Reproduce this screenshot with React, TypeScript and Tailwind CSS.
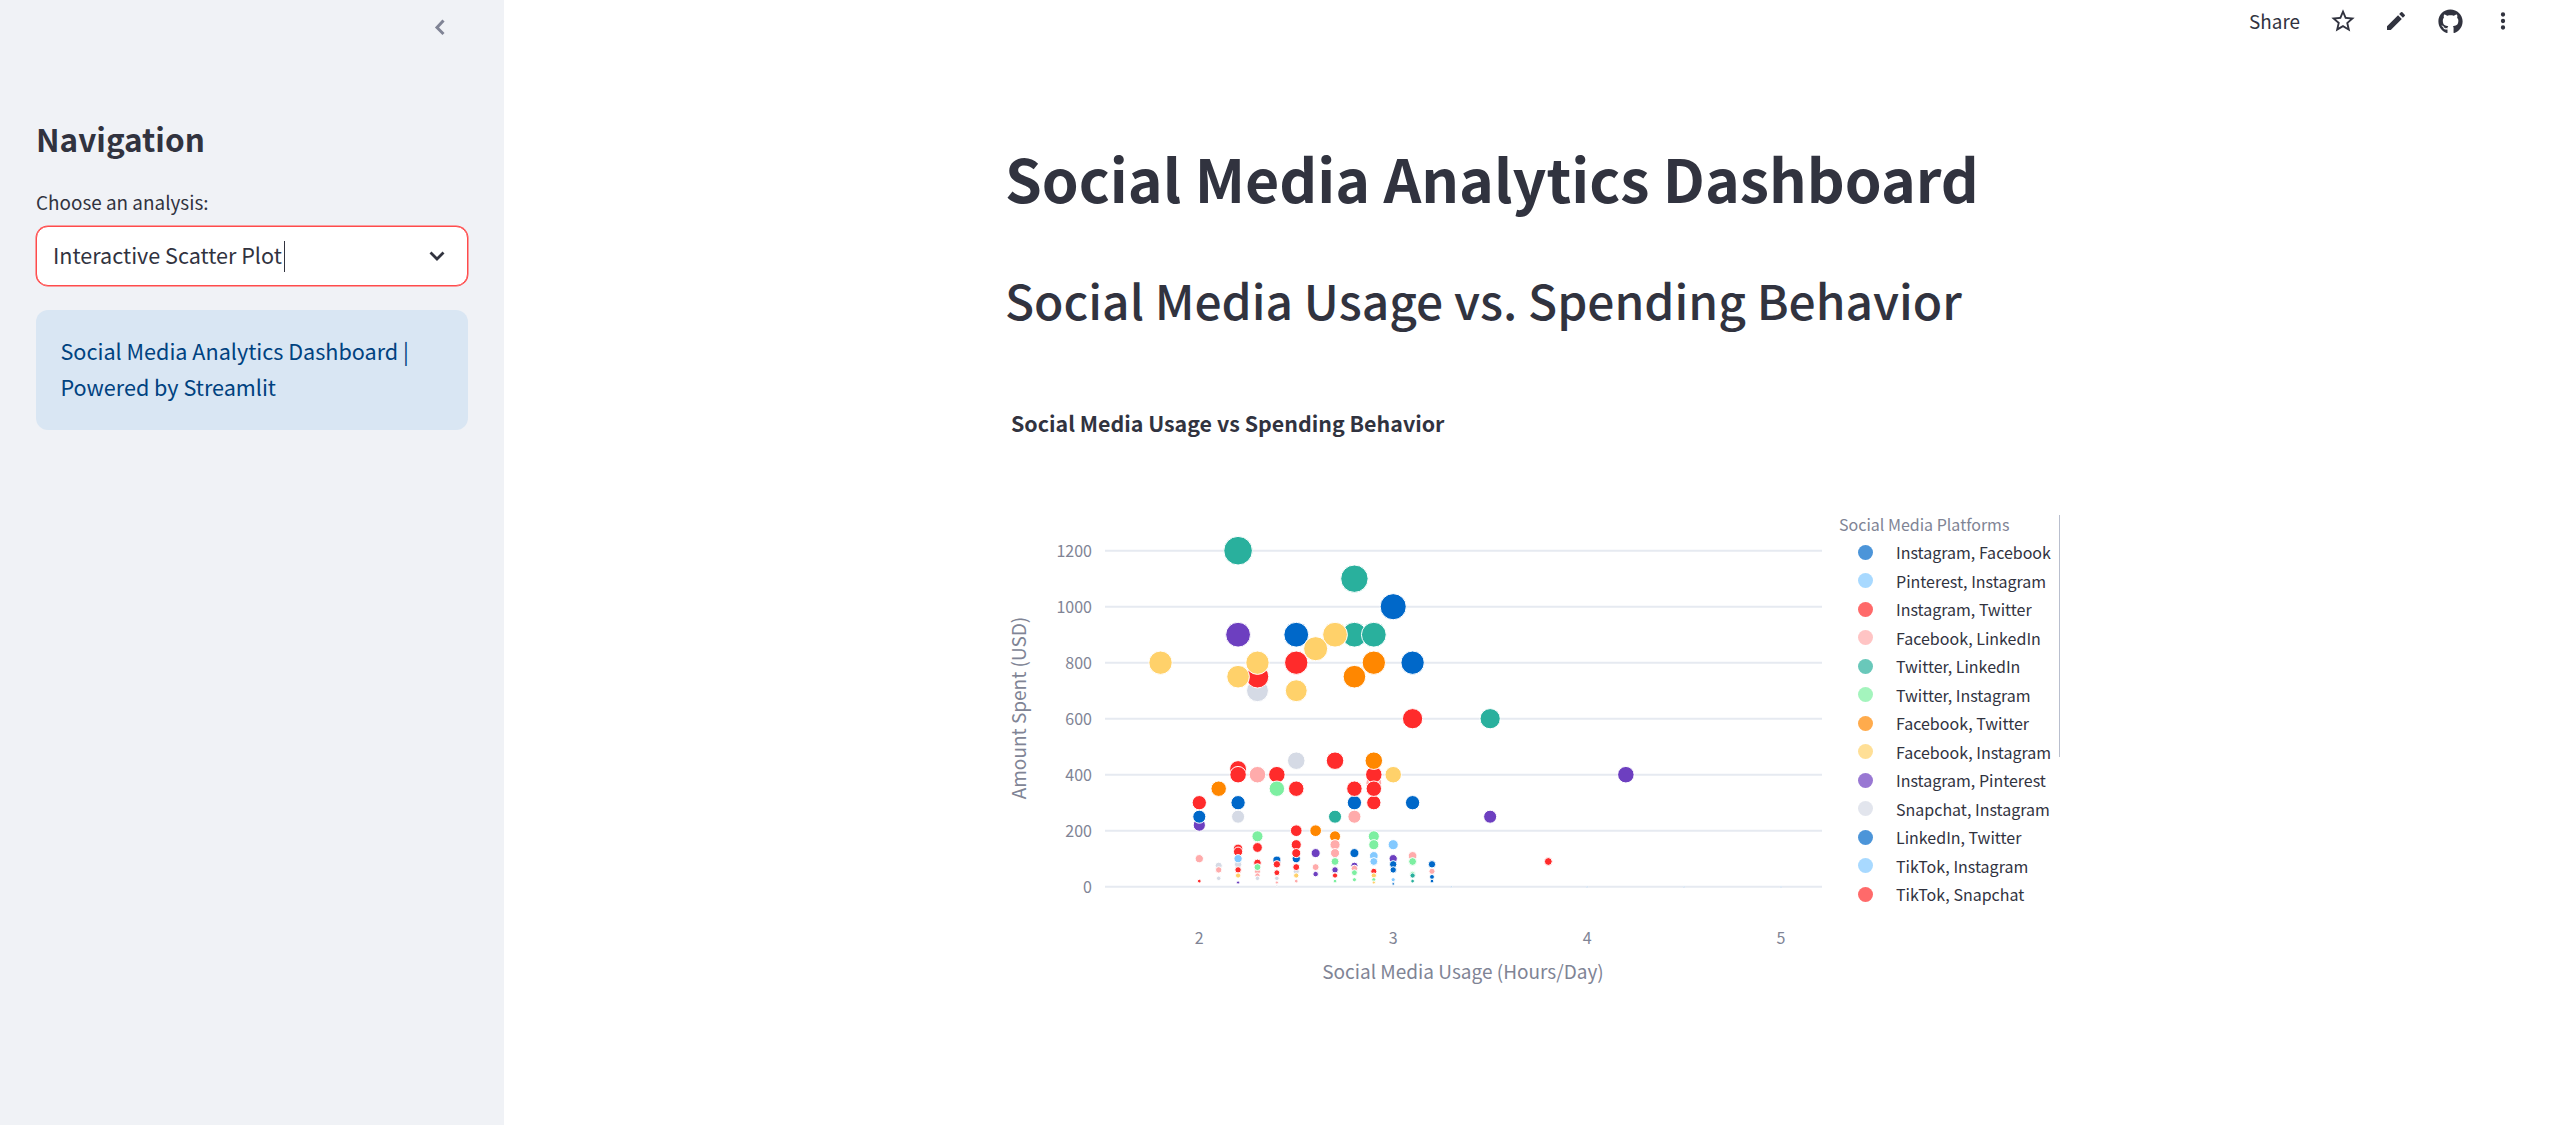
import { FaGithub } from 'react-icons/fa'

type Point = [number, number, string]

const BLUE = '#0068c9'
const SKY = '#83c9ff'
const RED = '#ff2b2b'
const PINK = '#ffabab'
const TEAL = '#29b09d'
const GREEN = '#7defa1'
const ORANGE = '#ff8700'
const YELLOW = '#ffd16a'
const PURPLE = '#6d3fc0'
const GRAY = '#d5dae5'

// hours, usd, colour. Listed in paint order, later ones sit on top
const points: Point[] = [
  [2.2, 1200, TEAL],
  [2.8, 1100, TEAL],
  [3.0, 1000, BLUE],
  [2.2, 900, PURPLE],
  [2.5, 900, BLUE],
  [2.8, 900, TEAL],
  [2.9, 900, TEAL],
  [2.6, 850, YELLOW],
  [2.7, 900, YELLOW],
  [1.8, 800, YELLOW],
  [2.3, 700, GRAY],
  [2.3, 750, RED],
  [2.2, 750, YELLOW],
  [2.3, 800, YELLOW],
  [2.5, 800, RED],
  [2.9, 800, ORANGE],
  [3.1, 800, BLUE],
  [2.8, 750, ORANGE],
  [2.5, 700, YELLOW],
  [3.1, 600, RED],
  [3.5, 600, TEAL],
  [4.2, 400, PURPLE],
  [2.5, 450, GRAY],
  [2.7, 450, RED],
  [2.2, 420, RED],
  [2.2, 400, RED],
  [2.3, 400, PINK],
  [2.4, 400, RED],
  [2.9, 370, PINK],
  [2.9, 400, RED],
  [2.9, 300, RED],
  [2.9, 350, RED],
  [2.9, 450, ORANGE],
  [3.0, 400, YELLOW],
  [2.1, 350, ORANGE],
  [2.4, 350, GREEN],
  [2.5, 350, RED],
  [2.8, 300, BLUE],
  [2.8, 350, RED],
  [2.0, 300, RED],
  [2.2, 300, BLUE],
  [3.1, 300, BLUE],
  [2.0, 220, PURPLE],
  [2.0, 250, BLUE],
  [2.2, 250, GRAY],
  [2.7, 250, TEAL],
  [2.8, 250, PINK],
  [3.5, 250, PURPLE],
  [2.5, 200, RED],
  [2.6, 200, ORANGE],
  [2.3, 180, GREEN],
  [2.7, 180, ORANGE],
  [2.9, 180, GREEN],
  [2.5, 150, RED],
  [2.7, 150, PINK],
  [2.9, 150, GREEN],
  [3.0, 150, SKY],
  [2.2, 135, RED],
  [2.3, 140, RED],
  [2.2, 125, RED],
  [2.5, 100, BLUE],
  [2.5, 120, RED],
  [2.6, 120, PURPLE],
  [2.7, 120, PINK],
  [2.8, 120, BLUE],
  [2.9, 110, SKY],
  [3.1, 110, PINK],
  [2.0, 100, PINK],
  [2.2, 80, GRAY],
  [2.2, 100, SKY],
  [2.4, 95, BLUE],
  [3.0, 100, PURPLE],
  [2.9, 90, SKY],
  [2.7, 90, GREEN],
  [3.1, 90, GREEN],
  [3.8, 90, RED],
  [2.3, 85, RED],
  [2.4, 80, RED],
  [3.0, 80, BLUE],
  [3.2, 80, BLUE],
  [2.1, 75, GRAY],
  [2.8, 75, PURPLE],
  [2.1, 60, PINK],
  [2.3, 55, PINK],
  [2.3, 70, GREEN],
  [2.5, 55, GRAY],
  [2.5, 70, RED],
  [2.6, 70, PINK],
  [2.8, 65, PINK],
  [2.2, 60, RED],
  [2.7, 60, PURPLE],
  [3.0, 60, BLUE],
  [2.9, 55, RED],
  [3.2, 55, PINK],
  [2.8, 50, GREEN],
  [2.4, 50, RED],
  [2.6, 45, PURPLE],
  [3.1, 45, GREEN],
  [2.3, 40, PINK],
  [2.2, 40, YELLOW],
  [2.5, 40, YELLOW],
  [2.7, 40, RED],
  [2.9, 40, YELLOW],
  [3.1, 40, TEAL],
  [3.2, 35, BLUE],
  [2.1, 30, GRAY],
  [2.3, 30, GRAY],
  [2.4, 30, GRAY],
  [2.8, 25, GREEN],
  [2.9, 25, GREEN],
  [3.0, 25, SKY],
  [2.0, 20, RED],
  [2.5, 20, PINK],
  [2.7, 20, GREEN],
  [3.1, 20, TEAL],
  [3.2, 20, BLUE],
  [2.2, 15, PURPLE],
  [2.4, 15, PINK],
  [2.9, 15, YELLOW],
  [3.0, 10, BLUE],
  [2.4, 5, GRAY],
  [3.3, 0, BLUE],
  [4.0, 0, BLUE],
  [4.5, 0, BLUE],
  [5.0, 0, BLUE],
]

const legend: [string, string][] = [
  ['Instagram, Facebook', BLUE],
  ['Pinterest, Instagram', SKY],
  ['Instagram, Twitter', RED],
  ['Facebook, LinkedIn', PINK],
  ['Twitter, LinkedIn', TEAL],
  ['Twitter, Instagram', GREEN],
  ['Facebook, Twitter', ORANGE],
  ['Facebook, Instagram', YELLOW],
  ['Instagram, Pinterest', PURPLE],
  ['Snapchat, Instagram', GRAY],
  ['LinkedIn, Twitter', BLUE],
  ['TikTok, Instagram', SKY],
  ['TikTok, Snapchat', RED],
]

// svg sits at page x 1005, y 400
const px = (h: number) => 194.3 + (h - 2) * 193.9
const py = (usd: number) => 486.7 - usd * 0.28

function Chart() {
  return (
    <svg width={834} height={600} className="shrink-0">
      <text x={6} y={31.5} fontSize={21.4} fontWeight={700} fill="#31333f">
        Social Media Usage vs Spending Behavior
      </text>
      {[0, 200, 400, 600, 800, 1000, 1200].map((v) => (
        <g key={v}>
          <line x1={100} x2={817} y1={py(v)} y2={py(v)} stroke="#e6eaf1" strokeWidth={2} />
          <text x={87} y={py(v) + 6} fontSize={16} textAnchor="end" fill="#808495">
            {v}
          </text>
        </g>
      ))}
      {[2, 3, 4, 5].map((v) => (
        <text key={v} x={px(v)} y={544} fontSize={16} textAnchor="middle" fill="#808495">
          {v}
        </text>
      ))}
      <text x={458} y={579} fontSize={19} textAnchor="middle" fill="#808495">
        Social Media Usage (Hours/Day)
      </text>
      <text
        transform="translate(21 308) rotate(-90)"
        fontSize={19}
        textAnchor="middle"
        fill="#808495"
      >
        Amount Spent (USD)
      </text>
      {points.map(([h, usd, color], i) => (
        <circle
          key={i}
          cx={px(h)}
          cy={py(usd)}
          r={Math.max(14.3 * Math.sqrt(usd / 1200), 0.6)}
          fill={color}
          stroke="#fff"
          strokeWidth={1}
        />
      ))}
    </svg>
  )
}

function Legend() {
  return (
    <div className="relative mt-[112px] w-[224px] text-[#31333f]">
      <div className="h-[24px] text-[16px] leading-[24px] text-[#808495]">Social Media Platforms</div>
      <ul className="mt-[2px]">
        {legend.map(([name, color]) => (
          <li key={name} className="flex h-[28.5px] items-center text-[16px] leading-none">
            <span
              className="ml-[19px] mr-[23px] h-[15px] w-[15px] rounded-full opacity-70"
              style={{ backgroundColor: color }}
            />
            {name}
          </li>
        ))}
      </ul>
      <div className="absolute left-[220px] top-[3px] h-[242px] w-px bg-[#b9bfce]" />
    </div>
  )
}

function Sidebar() {
  return (
    <aside className="flex h-full w-[504px] shrink-0 flex-col bg-[#f0f2f6] px-[36px] text-[#31333f]">
      <div className="flex h-[54px] items-center justify-end pr-[16px]">
        <svg width="24" height="24" viewBox="0 0 24 24" fill="none" stroke="#808495" strokeWidth="3">
          <path d="M15.5 5.5 9 12.5l6.5 6.5" />
        </svg>
      </div>
      <h2 className="mt-[59px] text-[31.5px] leading-[50px] font-semibold">Navigation</h2>
      <label className="mt-[24px] text-[18.9px] leading-[30px]">Choose an analysis:</label>
      <div className="mt-[9px] flex h-[60px] items-center rounded-[12px] border border-[#ff4b4b] bg-white pl-[16px] pr-[20px] shadow-[0_0_0_0.5px_#ff4b4b]">
        <span className="pb-[2px] text-[21.6px] leading-none">Interactive Scatter Plot</span>
        <span className="ml-[2px] h-[31px] w-px bg-[#31333f]" />
        <svg className="ml-auto" width="20" height="20" viewBox="0 0 20 20" fill="none" stroke="#31333f" strokeWidth="2.8">
          <path d="M3.5 6.5 10 13l6.5-6.5" />
        </svg>
      </div>
      <div className="mt-[24px] h-[120px] rounded-[12px] bg-[#d9e6f3] px-[24.5px] pt-[23px] text-[21.6px] leading-[36px] text-[#004280]">
        Social Media Analytics Dashboard | Powered by Streamlit
      </div>
    </aside>
  )
}

function Toolbar() {
  return (
    <header className="flex h-[42px] items-center justify-end pr-[43px] text-[#31333f]">
      <span className="mr-[29px] text-[18.9px]">Share</span>
      <svg className="mr-[27px]" width="28" height="28" viewBox="0 0 24 24" fill="currentColor">
        <path d="M22 9.24l-7.19-.62L12 2 9.19 8.63 2 9.24l5.46 4.73L5.82 21 12 17.27 18.18 21l-1.63-7.03L22 9.24zM12 15.4l-3.76 2.27 1-4.28-3.32-2.88 4.38-.38L12 6.1l1.71 4.04 4.38.38-3.32 2.88 1 4.28L12 15.4z" />
      </svg>
      <svg className="mr-[30px]" width="24" height="24" viewBox="0 0 24 24" fill="currentColor">
        <path d="M3 17.25V21h3.75L17.81 9.94l-3.75-3.75L3 17.25zM20.71 7.04a1 1 0 000-1.41l-2.34-2.34a1 1 0 00-1.41 0l-1.83 1.83 3.75 3.75 1.83-1.83z" />
      </svg>
      <FaGithub className="mr-[27px] h-[25px] w-[25px]" />
      <svg width="26" height="26" viewBox="0 0 24 24" fill="currentColor">
        <path d="M12 8a2 2 0 100-4 2 2 0 000 4zm0 2a2 2 0 100 4 2 2 0 000-4zm0 6a2 2 0 100 4 2 2 0 000-4z" />
      </svg>
    </header>
  )
}

export default function App() {
  return (
    <div className="flex h-screen overflow-hidden bg-white font-['Noto_Sans_CJK_SC','Lato',sans-serif]">
      <Sidebar />
      <main className="min-w-0 flex-1 text-[#31333f]">
        <Toolbar />
        <div className="pl-[501px]">
          <h1 className="mt-[94px] text-[59px] leading-[84px] font-bold">Social Media Analytics Dashboard</h1>
          <h2 className="mt-[44px] text-[47.9px] leading-[70px] font-medium">Social Media Usage vs. Spending Behavior</h2>
          <div className="mt-[66px] flex">
            <Chart />
            <Legend />
          </div>
        </div>
      </main>
    </div>
  )
}
